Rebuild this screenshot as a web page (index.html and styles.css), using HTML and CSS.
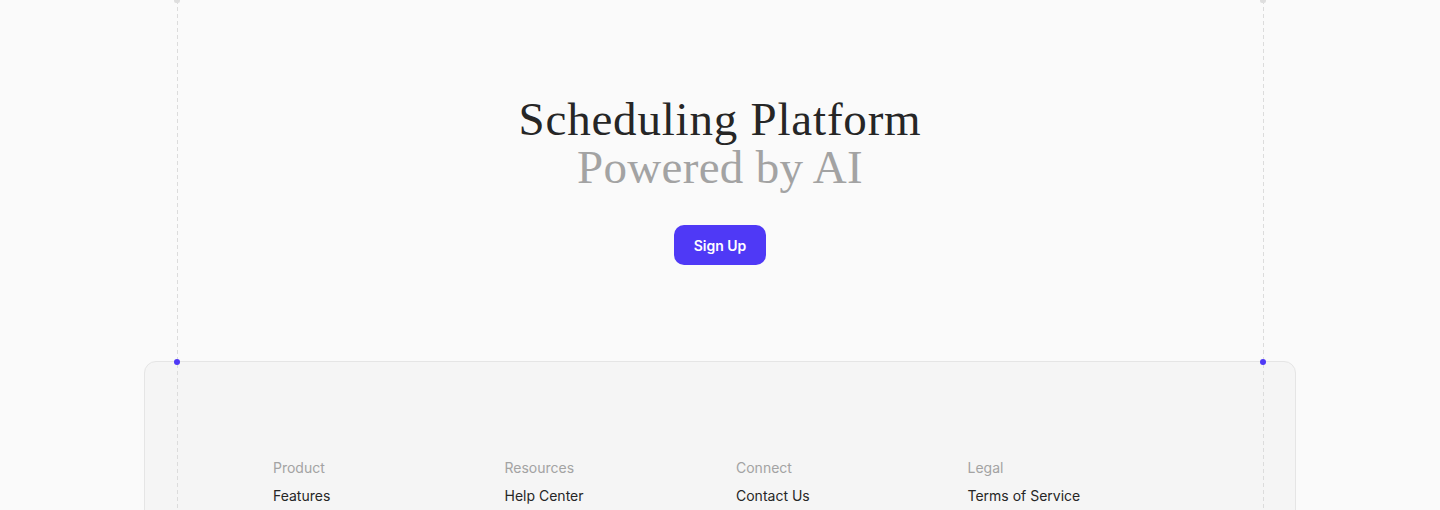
FILE: index.html
```html
<!DOCTYPE html>
<html lang="en">
<head>
<meta charset="utf-8">
<title>Scheduling Platform</title>
<link rel="stylesheet" href="styles.css">
</head>
<body>
<div class="page">
  <span class="guide guide-left"></span>
  <span class="guide guide-right"></span>
  <span class="cap cap-left"></span>
  <span class="cap cap-right"></span>

  <section class="hero">
    <h1 class="title">
      <span class="title-main">Scheduling Platform</span>
      <span class="title-sub">Powered by AI</span>
    </h1>
    <a class="btn" href="#">Sign Up</a>
  </section>

  <footer class="footer">
    <span class="dot dot-left"></span>
    <span class="dot dot-right"></span>
    <div class="cols">
      <div class="col">
        <div class="col-head">Product</div>
        <a class="col-link" href="#">Features</a>
      </div>
      <div class="col">
        <div class="col-head">Resources</div>
        <a class="col-link" href="#">Help Center</a>
      </div>
      <div class="col">
        <div class="col-head">Connect</div>
        <a class="col-link" href="#">Contact Us</a>
      </div>
      <div class="col">
        <div class="col-head">Legal</div>
        <a class="col-link" href="#">Terms of Service</a>
      </div>
    </div>
  </footer>
</div>
</body>
</html>
```

FILE: styles.css
```css
* { box-sizing: border-box; }
html, body { margin: 0; padding: 0; }
body {
  background: #fafafa;
  font-family: Inter, "Noto Sans", sans-serif;
  color: #262626;
  overflow: hidden;
}
.page {
  position: relative;
  min-height: 510px;
}
.guide {
  position: absolute;
  top: 0;
  bottom: 0;
  width: 1px;
  background-image: linear-gradient(to bottom, #dcdcdc 0, #dcdcdc 4px, transparent 4px, transparent 7px);
  background-size: 1px 7px;
  z-index: 2;
  pointer-events: none;
}
.guide-left { left: 176.5px; }
.guide-right { left: 1262.5px; }
.cap {
  position: absolute;
  top: -3px;
  width: 6px;
  height: 6px;
  border-radius: 2px;
  background: #dedede;
  z-index: 3;
}
.cap-left { left: 174px; }
.cap-right { left: 1260px; }

.hero {
  height: 361px;
  padding-top: 95px;
  text-align: center;
}
.title {
  margin: 0;
  font-family: "Liberation Serif", "DejaVu Serif", serif;
  font-weight: 400;
  font-size: 47px;
  line-height: 48px;
}
.title-main, .title-sub { display: block; }
.title-main { color: #262626; letter-spacing: 0.8px; }
.title-sub { color: #a3a3a3; letter-spacing: 0.3px; }
.btn {
  display: inline-flex;
  align-items: center;
  justify-content: center;
  margin-top: 34px;
  width: 92px;
  height: 40px;
  border-radius: 10px;
  background: #4f39f6;
  color: #fff;
  font-size: 14px;
  font-weight: 600;
  text-decoration: none;
}

.footer {
  position: relative;
  width: 1152px;
  margin: 0 auto;
  min-height: 200px;
  background: #f5f5f5;
  border: 1px solid #e5e5e5;
  border-radius: 12px;
  padding: 96px 0 40px 128px;
}
.dot {
  position: absolute;
  top: -3px;
  width: 6px;
  height: 6px;
  border-radius: 50%;
  background: #4f39f6;
  z-index: 4;
}
.dot-left { left: 29px; }
.dot-right { left: 1115px; }
.cols {
  display: grid;
  grid-template-columns: repeat(4, 231.5px);
}
.col {
  display: flex;
  flex-direction: column;
  gap: 8px;
  font-size: 14px;
  line-height: 20px;
}
.col-head { color: #a3a3a3; }
.col-link { color: #262626; text-decoration: none; }
```
